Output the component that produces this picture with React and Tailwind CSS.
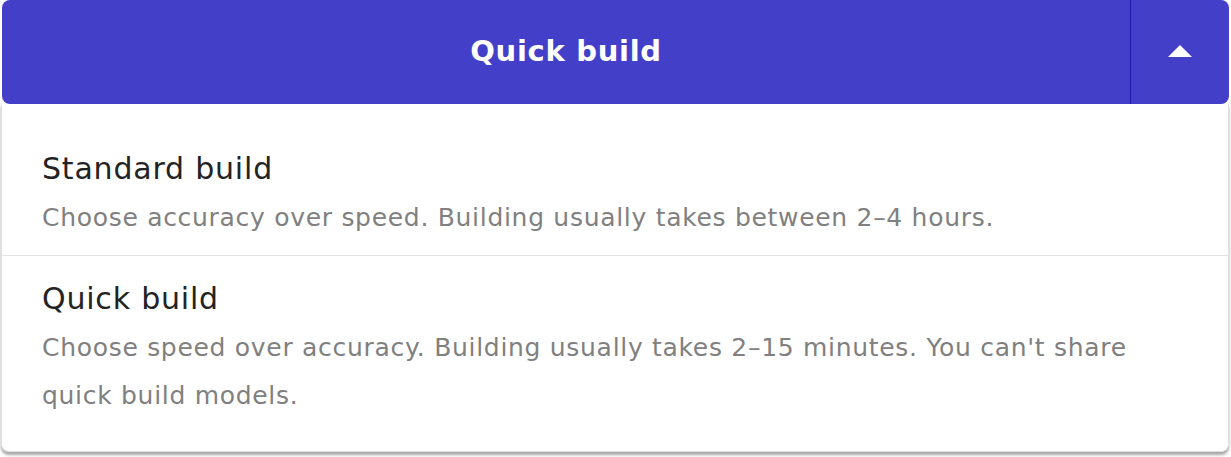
export default function App() {
  return (
    <div className="w-[1231px] h-[457px] bg-white overflow-hidden" style={{ fontFamily: '"DejaVu Sans", "Open Sans", sans-serif' }}>
      <div className="mx-[2px] h-[104px] rounded-lg bg-[#433fc8] flex">
        <div className="flex-1 flex items-center justify-center text-white font-bold text-[29px] tracking-[0.7px]">
          Quick build
        </div>
        <div className="w-px bg-[#1f1bb0]" />
        <div className="w-[98px] flex items-center justify-center pb-[2px]">
          <svg width="24" height="12" viewBox="0 0 24 12">
            <polygon points="12,0 24,12 0,12" fill="white" />
          </svg>
        </div>
      </div>
      <div className="ml-[1px] mr-[2px] h-[348px] bg-white border-x border-b border-[#e0e0e0] rounded-b-lg shadow-[0_3px_3px_rgba(0,0,0,0.35)]">
        <div className="pt-[45px] pb-[13px] pl-[40px] border-b border-[#e2e2e2]">
          <div className="text-[30px] leading-[40px] tracking-[0.8px] text-[#232323]">Standard build</div>
          <div className="mt-[5px] text-[25px] leading-[48px] tracking-[0.7px] text-[#808080]">
            Choose accuracy over speed. Building usually takes between 2–4 hours.
          </div>
        </div>
        <div className="pt-[23px] pl-[40px] pr-[76px]">
          <div className="text-[30px] leading-[40px] tracking-[0.8px] text-[#232323]">Quick build</div>
          <div className="mt-[5px] text-[25px] leading-[48px] tracking-[0.7px] text-[#808080]">
            Choose speed over accuracy. Building usually takes 2–15 minutes. You can't share quick build models.
          </div>
        </div>
      </div>
    </div>
  );
}
